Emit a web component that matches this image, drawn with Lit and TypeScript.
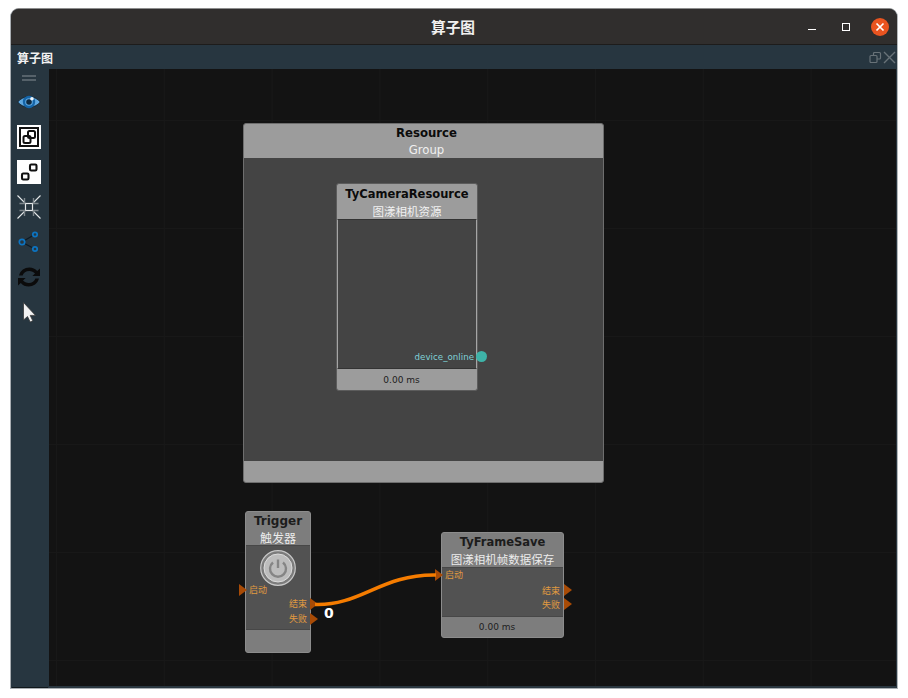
import { LitElement, html, css, svg } from "lit";
import { customElement } from "lit/decorators.js";

@customElement("app-root")
export class AppRoot extends LitElement {
  static styles = css`
    :host { display: block; width: 908px; height: 698px; background: #fff; font-family: "DejaVu Sans", "Noto Sans CJK SC", sans-serif; overflow: hidden; }
    .window { margin: 8px 0 0 10px; width: 888px; height: 681px; box-sizing: border-box; display: flex; flex-direction: column; border-radius: 9px 9px 0 0; overflow: hidden; background: #2a3740; border: 1px solid #a9aeb2; border-top-color: #8d8d8d; border-right-color: #b4b8ba; }
    .titlebar { height: 35px; flex: none; display: grid; grid-template-columns: 1fr auto 1fr; align-items: center; background: #302e2d; border-bottom: 1px solid #1d1c1b; color: #f0f0f0; font: bold 14.7px "Noto Sans CJK SC", sans-serif; }
    .title { grid-column: 2; margin-left: -2px; }
    .controls { grid-column: 3; justify-self: end; display: flex; align-items: center; padding-right: 8px; height: 100%; }
    .min { width: 8px; height: 1px; background: #fff; margin: 5px 26px 0 0; }
    .max { width: 6px; height: 6px; border: 1px solid #fff; margin-right: 21px; }
    .close { width: 18px; height: 18px; border-radius: 50%; background: #e95420; display: flex; align-items: center; justify-content: center; }
    .panelhead { height: 24px; flex: none; background: #273640; display: flex; align-items: center; justify-content: space-between; color: #f2f2f2; padding: 0 1px 0 6px; font: bold 12px "Noto Sans CJK SC", sans-serif; }
    .headicons { display: flex; align-items: center; gap: 1px; }
    .main { flex: 1; display: flex; min-height: 0; }
    .toolbar { width: 38px; flex: none; background: #273640; display: flex; flex-direction: column; align-items: center; padding: 6px 2px 0 0; box-sizing: border-box; position: relative; }
    .grip { width: 14px; height: 6px; border-top: 2px solid #56626a; border-bottom: 2px solid #56626a; box-sizing: border-box; margin-bottom: 9px; }
    .tool { width: 24px; height: 24px; margin-bottom: 11px; display: block; flex: none; }
    .tool.last { margin-bottom: 0; }
    .tbline { position: absolute; left: 1px; right: 1px; bottom: 0; height: 1px; background: #10181c; }
    .right { flex: 1; min-width: 0; display: flex; flex-direction: column; padding-right: 1px; }
    .canvas { flex: 1; position: relative; overflow: hidden; background-color: #131313;
      background-image: linear-gradient(#181818 1px, transparent 1px), linear-gradient(90deg, #181818 1px, transparent 1px);
      background-size: 107.8px 108px; background-position: 7px 51px; }
    .strip { height: 2px; flex: none; }
    .node { position: absolute; display: flex; flex-direction: column; box-sizing: border-box; border-radius: 3px; border: 1px solid #757575; background: #9c9c9c; }
    .node .head { display: flex; flex-direction: column; align-items: center; flex: none; box-sizing: border-box; }
    .name { color: #0b0b0b; font-weight: bold; font-size: 11.5px; line-height: 16px; margin-top: 1px; white-space: nowrap; }
    .sub { color: #f1f1f1; font-size: 11.5px; line-height: 17px; margin-top: 2px; white-space: nowrap; }
    .body { flex: 1; background: #444; position: relative; }
    .foot { flex: none; display: flex; align-items: center; justify-content: center; padding-right: 11px; font-size: 9px; color: #1d1d1d; }
    .group { left: 194px; top: 54px; width: 361px; height: 360px; background: #9c9c9c; border-color: #6e6e6e; }
    .group .head { height: 34px; padding-left: 6px; }
    .group .name { font-size: 11.7px; }
    .group .sub { color: #f0f0f0; font-size: 11.7px; margin-top: 1px; }
    .group .foot { height: 21px; }
    .cam { left: 287px; top: 114px; width: 142px; height: 208px; border-color: #5c5c5c; }
    .cam .head { height: 35px; }
    .cam .name { margin-top: 2px; }
    .cam .foot { height: 21px; }
    .cam .body { border: solid #a5a5a5; border-width: 0 1px; border-top: 1px solid #333; border-bottom: 1px solid #333; }
    .dim { background: #7d7d7d; border-color: #8c8c8c; }
    .dim .body { background: #525252; border-top: 1px solid #474747; border-bottom: 1px solid #474747; }
    .dim .name { color: #1c1c1c; }
    .dim .sub { color: #ececec; }
    .trigger { left: 196px; top: 442px; width: 66px; height: 142px; }
    .trigger .head { height: 33px; }
    .trigger .name, .trigger .sub { font-size: 12px; }
    .trigger .foot { height: 22px; }
    .save { left: 392px; top: 463px; width: 123px; height: 106px; }
    .save .head { height: 34px; }
    .save .foot { height: 20px; }
    .port { position: absolute; color: #e09a40; font-size: 9px; line-height: 12px; white-space: nowrap; }
    .devlabel { position: absolute; right: 2px; top: 131px; color: #7fd0d6; font-size: 8.7px; line-height: 12px; }
    .dev { position: absolute; left: 427px; top: 282px; width: 11px; height: 11px; border-radius: 50%; background: #3eb3a8; }
    .tri { position: absolute; width: 0; height: 0; border-left: 8px solid #a84b06; border-top: 6px solid transparent; border-bottom: 6px solid transparent; }
    .edge { position: absolute; left: 0; top: 0; pointer-events: none; }
    .count { position: absolute; left: 275px; top: 536px; color: #fff; font-weight: bold; font-size: 14px; line-height: 16px; }
    .power { position: absolute; left: 14px; top: 4px; }
  `;

  render() {
    return html`
      <div class="window">
        <div class="titlebar">
          <div class="title">算子图</div>
          <div class="controls">
            <div class="min"></div>
            <div class="max"></div>
            <div class="close">
              <svg width="10" height="10" viewBox="0 0 10 10"><path d="M1.5 1.5L8.5 8.5M8.5 1.5L1.5 8.5" stroke="#fff" stroke-width="1.7" fill="none"/></svg>
            </div>
          </div>
        </div>
        <div class="panelhead">
          <span>算子图</span>
          <div class="headicons">
            <svg width="13" height="13" viewBox="0 0 13 13" fill="none" stroke="#687278" stroke-width="1.2"><rect x="4.5" y="1.5" width="7" height="6.5" rx="1"/><rect x="1" y="4.5" width="7" height="7" rx="1" fill="#273640"/></svg>
            <svg width="13" height="13" viewBox="0 0 13 13"><path d="M1 1L12 12M12 1L1 12" stroke="#687278" stroke-width="1.4" fill="none"/></svg>
          </div>
        </div>
        <div class="main">
          <div class="toolbar">
            <div class="grip"></div>
            ${this.tools()}
            <div class="tbline"></div>
          </div>
          <div class="right">
            <div class="canvas">
              ${this.nodes()}
            </div>
            <div class="strip"></div>
          </div>
        </div>
      </div>
    `;
  }

  tools() {
    return html`
      <svg class="tool" viewBox="0 0 24 24">
        <path d="M0.8 12C5.5 5.2 18.5 5.2 23.2 12C18.5 18.8 5.5 18.8 0.8 12Z" fill="#5fa8e0" stroke="#0d1a24" stroke-width="0.7"/>
        <circle cx="12" cy="12" r="6.2" fill="#1565a8"/>
        <circle cx="12" cy="12" r="3.8" fill="#5fa8e0"/>
        <circle cx="12" cy="12" r="2.8" fill="#0f2a40"/>
        <circle cx="15" cy="8.8" r="1.8" fill="#f0f6fb"/>
      </svg>
      <svg class="tool" viewBox="0 0 24 24">
        <rect width="24" height="24" fill="#fff"/>
        <rect x="3" y="3" width="18" height="18" fill="none" stroke="#111" stroke-width="2"/>
        <rect x="11" y="6" width="7" height="7" rx="1.5" fill="#fff" stroke="#111" stroke-width="2"/>
        <rect x="6.5" y="11" width="7" height="7" rx="1.5" fill="none" stroke="#111" stroke-width="2"/>
      </svg>
      <svg class="tool" viewBox="0 0 24 24">
        <rect width="24" height="24" fill="#fff"/>
        <rect x="13" y="4.5" width="6.5" height="6" rx="1.2" fill="none" stroke="#111" stroke-width="2.1"/>
        <rect x="5" y="13.5" width="6.5" height="6" rx="1.2" fill="none" stroke="#111" stroke-width="2.1"/>
      </svg>
      <svg class="tool" viewBox="0 0 24 24" fill="none" stroke="#e4e7e8" stroke-width="1.1">
        <rect x="8.5" y="8.5" width="7" height="7" stroke-width="1.2"/>
        <path d="M0.5 0.5L8 8M23.5 0.5L16 8M0.5 23.5L8 16M23.5 23.5L16 16"/>
        <path d="M2.5 8.5H7.5V3M21.5 8.5H16.5V3M2.5 15.5H7.5V21M21.5 15.5H16.5V21" stroke="#7e878c" stroke-width="1.4"/>
      </svg>
      <svg class="tool" viewBox="0 0 24 24" fill="none" stroke="#0c74c2" stroke-width="1.7">
        <path d="M7.5 10.5L16 5.5M7.5 13.5L16 18" stroke="#0d1a24" stroke-width="1.2"/>
        <circle cx="5" cy="12" r="2.7"/>
        <circle cx="18" cy="4.5" r="2.2"/>
        <circle cx="18" cy="19" r="2.2"/>
      </svg>
      <svg class="tool" viewBox="0 0 24 24" fill="#0b0b0b">
        <path d="M2 10.5C3.3 5.3 7.8 2.5 12.3 2.5C15.5 2.5 18.4 3.9 20.2 6.1L23 3.4V11H15.4L18 8.5C16.6 7 14.6 6 12.3 6C9 6 6.3 7.8 5.6 10.5Z"/>
        <path d="M22 13.5C20.7 18.7 16.2 21.5 11.7 21.5C8.5 21.5 5.6 20.1 3.8 17.9L1 20.6V13H8.6L6 15.5C7.4 17 9.4 18 11.7 18C15 18 17.7 16.2 18.4 13.5Z"/>
      </svg>
      <svg class="tool last" viewBox="0 0 24 24">
        <path d="M6.5 2.5V20L10.5 16.5L13.2 22L15.8 20.8L13.2 15.4H18.5Z" fill="#f2f2f2" stroke="#3a3a3a" stroke-width="0.8"/>
      </svg>
    `;
  }

  nodes() {
    return html`
      <div class="node group">
        <div class="head"><div class="name">Resource</div><div class="sub">Group</div></div>
        <div class="body"></div>
        <div class="foot"></div>
      </div>
      <div class="node cam">
        <div class="head"><div class="name">TyCameraResource</div><div class="sub">图漾相机资源</div></div>
        <div class="body"><div class="devlabel">device_online</div></div>
        <div class="foot">0.00 ms</div>
      </div>
      <div class="dev"></div>

      <div class="node dim trigger">
        <div class="head"><div class="name">Trigger</div><div class="sub">触发器</div></div>
        <div class="body">
          <svg class="power" width="36" height="36" viewBox="0 0 36 36">
            <circle cx="18" cy="18" r="17.3" fill="#7c7c7c" stroke="#c8c8c8" stroke-width="1.2"/>
            <circle cx="18" cy="18" r="14" fill="#bdbdbd" stroke="#dcdcdc" stroke-width="1"/>
            <path d="M13 12.5A8 8 0 1 0 23 12.5" fill="none" stroke="#858585" stroke-width="2.4"/>
            <path d="M18 9.5V18" stroke="#858585" stroke-width="2.4"/>
          </svg>
          <div class="port" style="left:3px;top:38px">启动</div>
          <div class="port" style="right:3px;top:52px">结束</div>
          <div class="port" style="right:3px;top:67px">失败</div>
        </div>
        <div class="foot"></div>
      </div>
      <div class="tri" style="left:190px;top:515px"></div>
      <div class="tri" style="left:261px;top:529px"></div>
      <div class="tri" style="left:261px;top:544px"></div>

      <div class="node dim save">
        <div class="head"><div class="name">TyFrameSave</div><div class="sub">图漾相机帧数据保存</div></div>
        <div class="body">
          <div class="port" style="left:3px;top:1px">启动</div>
          <div class="port" style="right:3px;top:17px">结束</div>
          <div class="port" style="right:3px;top:31px">失败</div>
        </div>
        <div class="foot">0.00 ms</div>
      </div>
      <div class="tri" style="left:386px;top:500px"></div>
      <div class="tri" style="left:515px;top:515px"></div>
      <div class="tri" style="left:515px;top:529px"></div>

      <svg class="edge" width="847" height="617">
        ${svg`<path d="M266 535.5C312 537 332 505 387 506" fill="none" stroke="#f57c00" stroke-width="3.5"/>`}
      </svg>
      <div class="count">0</div>
    `;
  }
}
